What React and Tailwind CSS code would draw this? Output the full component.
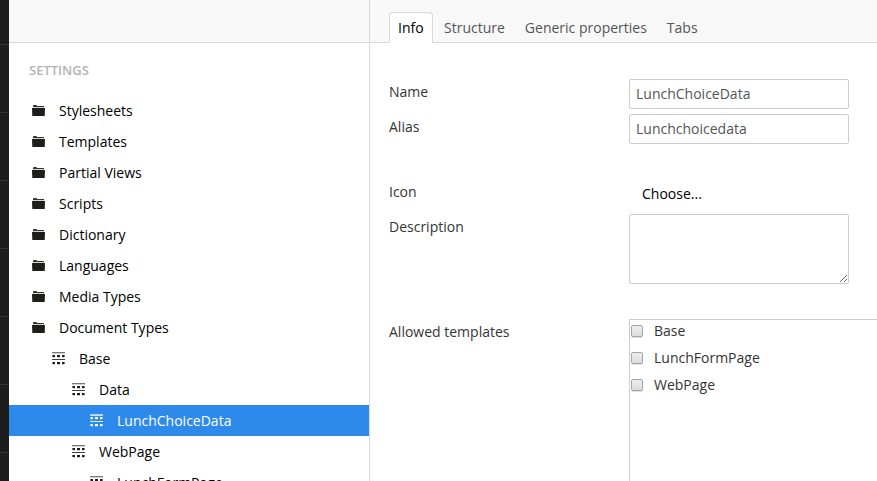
const folders = [
  'Stylesheets',
  'Templates',
  'Partial Views',
  'Scripts',
  'Dictionary',
  'Languages',
  'Media Types',
  'Document Types',
];

const types = [
  { label: 'Base', pad: 'pl-[43px]' },
  { label: 'Data', pad: 'pl-[63px]' },
  { label: 'LunchChoiceData', pad: 'pl-[81px]', active: true },
  { label: 'WebPage', pad: 'pl-[63px]' },
  { label: 'LunchFormPage', pad: 'pl-[81px]' },
];

function FolderIcon() {
  return (
    <svg className="h-[11px] w-[13px] shrink-0" viewBox="0 0 13 11" fill="#1d1d1b">
      <path d="M1 2V1Q1 0 2 0H4Q5 0 5 1H12V2Z" opacity=".9" />
      <rect x="1" y="2" width="11" height="1" opacity=".2" />
      <path d="M0 3H13L12.700 11H.3Z" />
    </svg>
  );
}

function TypeIcon({ active }) {
  return (
    <svg
      className="h-[13px] w-[13px] shrink-0"
      viewBox="0 0 13 13"
      fill={active ? '#fff' : '#1d1d1d'}
    >
      <rect x="0" y="0" width="13" height="1" opacity=".6" />
      <rect x="0" y="1" width="13" height="1" opacity={active ? 0.7 : 0.2} />
      <rect x="0" y="7" width="13" height="1" opacity=".85" />
      {[3, 10].map((y) => (
        <g key={y}>
          <rect x="0.4" y={y} width="2.600" height="2" />
          <rect x="5" y={y} width="3" height="2" />
          <rect x="10" y={y} width="2.600" height="2" />
          <rect x="1" y={y + 2} width="2" height="1" opacity=".2" />
          <rect x="5" y={y + 2} width="3" height="1" opacity=".2" />
          <rect x="10" y={y + 2} width="2" height="1" opacity=".2" />
        </g>
      ))}
    </svg>
  );
}

function Check({ label }) {
  return (
    <label className="flex h-[27px] items-center gap-[11px]">
      <span className="h-3 w-3 rounded-[2px] border border-[#a5a5a5] bg-linear-to-b from-[#ededed] to-[#dcdcdc] shadow-[0_1px_0_#e0e0e0]" />
      <span>{label}</span>
    </label>
  );
}

function Row({ label, height, children }) {
  return (
    <div className={`flex ${height}`}>
      <div className="w-[240px] shrink-0 pt-[3px] leading-5">{label}</div>
      {children}
    </div>
  );
}

export default function App() {
  const field =
    'h-[30px] w-[220px] rounded-[2px] border border-[#ccc] bg-white px-[6px] pb-[2px] text-[#555] outline-none';
  return (
    <div className="flex h-[481px] w-[877px] overflow-hidden bg-white font-['Open_Sans',sans-serif] text-[14px] text-[#343434]">
      <div className="w-[9px] shrink-0 bg-[#1d1d1d]">
        <div className="h-[45px] border-b border-[#343434]" />
        {[1, 2, 3, 4, 5, 6].map((n) => (
          <div key={n} className="h-[68px] border-b border-[#343434]" />
        ))}
      </div>

      <aside className="w-[361px] shrink-0 border-r border-[#d9d9d9]">
        <div className="h-[43px] border-b border-[#d9d9d9] bg-[#f8f8f8]" />
        <h5 className="h-[52px] pl-5 pt-[17px] text-[13px] leading-5 font-semibold text-[#b3b3b3]">
          SETTINGS
        </h5>
        <ul>
          {folders.map((f) => (
            <li key={f} className="flex h-[31px] items-center gap-[14px] pl-[23px] text-black">
              <FolderIcon />
              {f}
            </li>
          ))}
          {types.map((t) => (
            <li
              key={t.label}
              className={`flex h-[31px] items-center gap-[14px] ${t.pad} ${
                t.active ? 'bg-[#2e8aea] text-white' : 'text-black'
              }`}
            >
              <TypeIcon active={t.active} />
              {t.label}
            </li>
          ))}
        </ul>
      </aside>

      <main className="min-w-0 flex-1">
        <nav className="flex h-[43px] items-end border-b border-[#d9d9d9] bg-[#f8f8f8] pl-[19px] leading-[30px] text-[#555]">
          <div className="-mb-px h-[31px] w-[44px] rounded-t-[4px] border border-b-0 border-[#d9d9d9] bg-white pl-2 text-black">
            Info
          </div>
          <div className="-mb-px pl-[11px] pr-[10px]">Structure</div>
          <div className="-mb-px px-[10px]">Generic properties</div>
          <div className="-mb-px px-[10px]">Tabs</div>
        </nav>
        <div className="pl-[19px] pt-9">
          <Row label="Name" height="h-[35px]">
            <input className={field} defaultValue="LunchChoiceData" />
          </Row>
          <Row label="Alias" height="h-[65px]">
            <input className={field} defaultValue="Lunchchoicedata" />
          </Row>
          <Row label="Icon" height="h-[35px]">
            <div className="pl-[13px] pt-[5px] leading-5 text-black">Choose...</div>
          </Row>
          <Row label="Description" height="h-[105px]">
            <textarea className="h-[70px] w-[220px] resize rounded-[2px] border border-[#ccc] outline-none" />
          </Row>
          <Row label="Allowed templates" height="h-[200px]">
            <div className="w-[300px] shrink-0 border border-[#ccc] pl-px">
              <div className="-mt-[3px]">
                <Check label="Base" />
                <Check label="LunchFormPage" />
                <Check label="WebPage" />
              </div>
            </div>
          </Row>
        </div>
      </main>
    </div>
  );
}
